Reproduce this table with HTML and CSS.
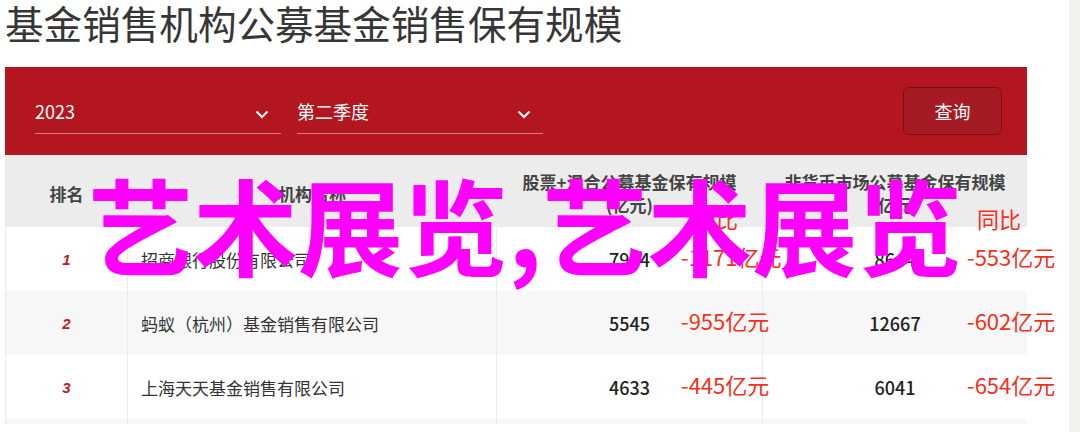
FILE: index.html
```html
<!DOCTYPE html>
<html lang="zh-CN">
<head>
    <meta charset="UTF-8">
    <meta name="viewport" content="width=device-width, initial-scale=1.0">
    <title>基金销售机构公募基金销售保有规模</title>
    <link rel="stylesheet" href="styles.css">
</head>
<body>

    <div class="page">
        <div class="main">
            <h1>基金销售机构公募基金销售保有规模</h1>

            <!-- Filter bar -->
            <div class="filter-bar">
                <div class="select">
                    <span>2023</span>
                    <svg class="chevron" width="14" height="9" viewBox="0 0 14 9"><path d="M1.5 1.5 L7 7 L12.5 1.5" fill="none" stroke="#fff" stroke-width="2"/></svg>
                </div>
                <div class="select">
                    <span>第二季度</span>
                    <svg class="chevron" width="14" height="9" viewBox="0 0 14 9"><path d="M1.5 1.5 L7 7 L12.5 1.5" fill="none" stroke="#fff" stroke-width="2"/></svg>
                </div>
                <button class="query-btn">查询</button>
            </div>

            <!-- Ranking table -->
            <div class="table">
                <div class="row head">
                    <div class="cell">排名</div>
                    <div class="cell">机构名称</div>
                    <div class="cell">股票+混合公募基金保有规模<br>(亿元)<span class="yoy-label yoy-a">同比</span></div>
                    <div class="cell">非货币市场公募基金保有规模<br>(亿元)<span class="yoy-label yoy-b">同比</span></div>
                </div>
                <div class="row">
                    <div class="cell rank">1</div>
                    <div class="cell name">招商银行股份有限公司</div>
                    <div class="cell num">7924<span class="yoy yoy-a">-1171亿元</span></div>
                    <div class="cell num">8644<span class="yoy yoy-b">-553亿元</span></div>
                </div>
                <div class="row alt">
                    <div class="cell rank">2</div>
                    <div class="cell name">蚂蚁（杭州）基金销售有限公司</div>
                    <div class="cell num">5545<span class="yoy yoy-a">-955亿元</span></div>
                    <div class="cell num">12667<span class="yoy yoy-b">-602亿元</span></div>
                </div>
                <div class="row">
                    <div class="cell rank">3</div>
                    <div class="cell name">上海天天基金销售有限公司</div>
                    <div class="cell num">4633<span class="yoy yoy-a">-445亿元</span></div>
                    <div class="cell num">6041<span class="yoy yoy-b">-654亿元</span></div>
                </div>
                <div class="row alt peek">
                    <div class="cell"></div>
                    <div class="cell"></div>
                    <div class="cell"></div>
                    <div class="cell"></div>
                </div>
            </div>

            <!-- Watermark -->
            <div class="watermark">艺术展览,艺术展览</div>
        </div>
        <div class="track"></div>
    </div>

</body>
</html>
```

FILE: styles.css
```css
/* Fund sales ranking page */
body {
    margin: 0;
    font-family: "Noto Sans CJK SC", "Noto Sans", sans-serif;
    color: #333;
    background: #fff;
}

.page {
    display: flex;
    height: 432px;
}

.main {
    position: relative;
    flex: 1;
    padding: 0 42px 0 5px;
}

.track {
    width: 11px;
    background-color: #f2f1ee;
}

h1 {
    margin: -3px 0 0;
    font-size: 38.6px;
    font-weight: normal;
    line-height: 50px;
    color: #363636;
    white-space: nowrap;
}

/* Filter bar */
.filter-bar {
    display: flex;
    align-items: center;
    gap: 16px;
    height: 88px;
    margin-top: 20px;
    padding: 0 25px 0 30px;
    background-color: #b41620;
}

.select {
    display: flex;
    align-items: center;
    justify-content: space-between;
    width: 246px;
    height: 44px;
    border-bottom: 1px solid rgba(255, 255, 255, 0.45);
    color: #fff;
    font-size: 18px;
}

.chevron {
    margin: 8px 12px 0 0;
}

.query-btn {
    margin-left: auto;
    width: 99px;
    height: 48px;
    background-color: #a41b23;
    border: 1px solid #7c0d13;
    border-radius: 6px;
    color: #fff;
    font-family: inherit;
    font-size: 18px;
}

/* Table */
.row {
    display: grid;
    grid-template-columns: 123px 369px 266px 264px;
    height: 64px;
    background-color: #fff;
}

.row.alt {
    background-color: #f7f7f7;
}

.row.peek {
    height: 5px;
}

.cell {
    position: relative;
    display: flex;
    align-items: center;
    justify-content: center;
    border-right: 1px solid #ebebeb;
}

.cell:first-child {
    border-left: 1px solid #ebebeb;
}

.cell:last-child {
    border-right: none;
}

.row.head {
    height: 72px;
    background-color: #ececec;
}

.head .cell {
    box-sizing: border-box;
    padding-top: 4px;
    font-size: 17px;
    font-weight: bold;
    line-height: 23px;
    color: #444;
    text-align: center;
}

.rank {
    font-family: "Liberation Sans", Arial, sans-serif;
    font-size: 15px;
    font-weight: bold;
    font-style: italic;
    color: #bf1b23;
}

.name {
    justify-content: flex-start;
    padding-left: 13px;
    font-size: 17px;
    color: #333;
}

.num {
    font-size: 18px;
    font-weight: 500;
    color: #222;
}

/* Year-on-year overlay figures */
.yoy,
.yoy-label {
    position: absolute;
    font-size: 22px;
    font-weight: normal;
    color: #f3301f;
    white-space: nowrap;
    line-height: 22px;
}

.yoy {
    top: 18px;
}

.yoy.yoy-a { left: 184px; }
.yoy.yoy-b { left: 204px; }

.yoy-label {
    top: 52px;
}

.yoy-label.yoy-a { left: 197px; }
.yoy-label.yoy-b { left: 214px; }

/* Watermark */
.watermark {
    position: absolute;
    left: 88px;
    top: 170px;
    font-size: 105px;
    font-weight: bold;
    line-height: 105px;
    color: #ff00ff;
    white-space: nowrap;
}
```
